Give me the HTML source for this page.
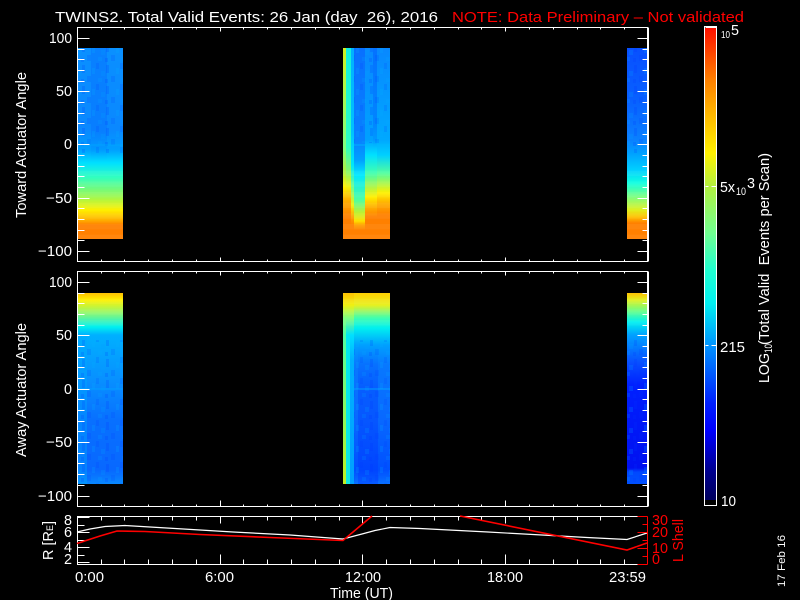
<!DOCTYPE html>
<html><head><meta charset="utf-8"><title>TWINS2</title>
<style>
html,body{margin:0;padding:0;background:#000;width:800px;height:600px;overflow:hidden}
svg{display:block;position:absolute;left:0;top:0}
text{font-family:"Liberation Sans",sans-serif;font-size:14.5px;fill:#fff}
.r{fill:#f00}
.s{font-size:11px}
</style></head><body>
<svg width="800" height="600" viewBox="0 0 800 600" xmlns="http://www.w3.org/2000/svg">
<defs>
<linearGradient id="a1" gradientUnits="userSpaceOnUse" x1="0" y1="0" x2="0" y2="1000">
<stop offset=".048" stop-color="#0a90ff"/><stop offset=".13" stop-color="#0a88ff"/><stop offset=".15" stop-color="#00a0ff"/><stop offset=".163" stop-color="#00e0ff"/><stop offset=".177" stop-color="#30ffc0"/><stop offset=".197" stop-color="#a0f850"/><stop offset=".21" stop-color="#fff000"/><stop offset=".22" stop-color="#ffb000"/><stop offset=".225" stop-color="#ff8000"/><stop offset=".239" stop-color="#ff8000"/>
</linearGradient>
<linearGradient id="m0" gradientUnits="userSpaceOnUse" x1="0" y1="0" x2="0" y2="1000">
<stop offset=".048" stop-color="#d0f020"/><stop offset=".147" stop-color="#80ff80"/><stop offset=".173" stop-color="#b0f040"/><stop offset=".187" stop-color="#fff000"/><stop offset=".2" stop-color="#ffb000"/><stop offset=".217" stop-color="#ff8000"/><stop offset=".239" stop-color="#ff8000"/>
</linearGradient>
<linearGradient id="m1" gradientUnits="userSpaceOnUse" x1="0" y1="0" x2="0" y2="1000">
<stop offset=".048" stop-color="#10f0e0"/><stop offset=".147" stop-color="#30ffc0"/><stop offset=".173" stop-color="#90f860"/><stop offset=".187" stop-color="#f0f010"/><stop offset=".2" stop-color="#ffb000"/><stop offset=".217" stop-color="#ff8000"/><stop offset=".239" stop-color="#ff8000"/>
</linearGradient>
<linearGradient id="m2" gradientUnits="userSpaceOnUse" x1="0" y1="0" x2="0" y2="1000">
<stop offset=".048" stop-color="#00b0ff"/><stop offset=".13" stop-color="#00c0ff"/><stop offset=".165" stop-color="#00e8f8"/><stop offset=".187" stop-color="#70ff90"/><stop offset=".205" stop-color="#f0f010"/><stop offset=".217" stop-color="#ffa000"/><stop offset=".225" stop-color="#ff8000"/><stop offset=".239" stop-color="#ff8000"/>
</linearGradient>
<linearGradient id="m3" gradientUnits="userSpaceOnUse" x1="0" y1="0" x2="0" y2="1000">
<stop offset=".048" stop-color="#0870ff"/><stop offset=".14" stop-color="#0880ff"/><stop offset=".16" stop-color="#00a0ff"/><stop offset=".175" stop-color="#00e8ff"/><stop offset=".2" stop-color="#50ffa0"/><stop offset=".213" stop-color="#c0f030"/><stop offset=".221" stop-color="#ffe000"/><stop offset=".225" stop-color="#ffa000"/><stop offset=".23" stop-color="#ff8000"/><stop offset=".239" stop-color="#ff8000"/>
</linearGradient>
<linearGradient id="m4" gradientUnits="userSpaceOnUse" x1="0" y1="0" x2="0" y2="1000">
<stop offset=".048" stop-color="#0888ff"/><stop offset=".14" stop-color="#00a0ff"/><stop offset=".155" stop-color="#00e0ff"/><stop offset=".173" stop-color="#40ffb0"/><stop offset=".197" stop-color="#fff000"/><stop offset=".207" stop-color="#ffb000"/><stop offset=".217" stop-color="#ff8000"/><stop offset=".239" stop-color="#ff8000"/>
</linearGradient>
<linearGradient id="m5" gradientUnits="userSpaceOnUse" x1="0" y1="0" x2="0" y2="1000">
<stop offset=".048" stop-color="#0888ff"/><stop offset=".14" stop-color="#00a8ff"/><stop offset=".155" stop-color="#00d0ff"/><stop offset=".173" stop-color="#50ffa0"/><stop offset=".193" stop-color="#fff000"/><stop offset=".203" stop-color="#ffb000"/><stop offset=".215" stop-color="#ff8000"/><stop offset=".239" stop-color="#ff8000"/>
</linearGradient>
<linearGradient id="r1" gradientUnits="userSpaceOnUse" x1="0" y1="0" x2="0" y2="1000">
<stop offset=".048" stop-color="#0850ff"/><stop offset=".1" stop-color="#0860ff"/><stop offset=".14" stop-color="#0a80ff"/><stop offset=".153" stop-color="#00a0ff"/><stop offset=".17" stop-color="#00d0ff"/><stop offset=".183" stop-color="#10ffe0"/><stop offset=".197" stop-color="#80ff80"/><stop offset=".21" stop-color="#e0f020"/><stop offset=".217" stop-color="#ffc000"/><stop offset=".223" stop-color="#ff8000"/><stop offset=".239" stop-color="#ff8000"/>
</linearGradient>
<linearGradient id="a2" gradientUnits="userSpaceOnUse" x1="0" y1="0" x2="0" y2="1000">
<stop offset=".293" stop-color="#ffc000"/><stop offset=".3" stop-color="#fff000"/><stop offset=".313" stop-color="#90f870"/><stop offset=".327" stop-color="#00f0f0"/><stop offset=".335" stop-color="#00b0ff"/><stop offset=".38" stop-color="#0890ff"/><stop offset=".42" stop-color="#0870ff"/><stop offset=".47" stop-color="#0868ff"/><stop offset=".484" stop-color="#0888ff"/>
</linearGradient>
<linearGradient id="n0" gradientUnits="userSpaceOnUse" x1="0" y1="0" x2="0" y2="1000">
<stop offset=".293" stop-color="#ffc000"/><stop offset=".305" stop-color="#f0f010"/><stop offset=".318" stop-color="#80ff80"/><stop offset=".335" stop-color="#50ffa0"/><stop offset=".484" stop-color="#c0f020"/>
</linearGradient>
<linearGradient id="n1" gradientUnits="userSpaceOnUse" x1="0" y1="0" x2="0" y2="1000">
<stop offset=".293" stop-color="#ffc000"/><stop offset=".305" stop-color="#f0f010"/><stop offset=".318" stop-color="#80ff80"/><stop offset=".335" stop-color="#00e8f0"/><stop offset=".484" stop-color="#10e8e0"/>
</linearGradient>
<linearGradient id="n2" gradientUnits="userSpaceOnUse" x1="0" y1="0" x2="0" y2="1000">
<stop offset=".293" stop-color="#ffc000"/><stop offset=".305" stop-color="#f0f010"/><stop offset=".318" stop-color="#80ff80"/><stop offset=".335" stop-color="#00e0ff"/><stop offset=".36" stop-color="#00b0ff"/><stop offset=".484" stop-color="#00a0ff"/>
</linearGradient>
<linearGradient id="n3" gradientUnits="userSpaceOnUse" x1="0" y1="0" x2="0" y2="1000">
<stop offset=".293" stop-color="#ffd000"/><stop offset=".305" stop-color="#e8f020"/><stop offset=".318" stop-color="#40ffb0"/><stop offset=".328" stop-color="#00f0f0"/><stop offset=".345" stop-color="#00a0ff"/><stop offset=".365" stop-color="#0878ff"/><stop offset=".42" stop-color="#0868ff"/><stop offset=".47" stop-color="#0050ff"/><stop offset=".484" stop-color="#0870ff"/>
</linearGradient>
<linearGradient id="r2" gradientUnits="userSpaceOnUse" x1="0" y1="0" x2="0" y2="1000">
<stop offset=".293" stop-color="#ffc000"/><stop offset=".3" stop-color="#e0f020"/><stop offset=".312" stop-color="#60ff90"/><stop offset=".322" stop-color="#00f0f0"/><stop offset=".335" stop-color="#00a0ff"/><stop offset=".362" stop-color="#0850ff"/><stop offset=".385" stop-color="#0020ff"/><stop offset=".468" stop-color="#0010f0"/><stop offset=".472" stop-color="#0048ff"/><stop offset=".484" stop-color="#0050ff"/>
</linearGradient>
<linearGradient id="cb" gradientUnits="userSpaceOnUse" x1="0" y1="0" x2="0" y2="1000">
<stop offset=".028" stop-color="#ff1000"/><stop offset=".08" stop-color="#ff8000"/><stop offset=".11" stop-color="#ffb000"/><stop offset=".153" stop-color="#fff000"/><stop offset=".187" stop-color="#b0f040"/><stop offset=".233" stop-color="#70ff90"/><stop offset=".27" stop-color="#20ffd0"/><stop offset=".303" stop-color="#00f0f0"/><stop offset=".347" stop-color="#0090ff"/><stop offset=".403" stop-color="#0020ff"/><stop offset=".43" stop-color="#0000ff"/><stop offset=".47" stop-color="#000090"/><stop offset=".498" stop-color="#000060"/>
</linearGradient>
<linearGradient id="fd" x1="0" y1="0" x2="0" y2="1">
<stop offset="0" stop-color="#0050ff" stop-opacity=".4"/><stop offset=".75" stop-color="#0050ff" stop-opacity=".3"/><stop offset="1" stop-color="#0050ff" stop-opacity="0"/>
</linearGradient>
<linearGradient id="fu" x1="0" y1="0" x2="0" y2="1">
<stop offset="0" stop-color="#0050ff" stop-opacity="0"/><stop offset=".3" stop-color="#0030ff" stop-opacity=".3"/><stop offset="1" stop-color="#0030ff" stop-opacity=".35"/>
</linearGradient>
<pattern id="tx" patternUnits="userSpaceOnUse" width="24" height="21">
<rect x="0" y="0" width="3" height="6" fill="#0030ff" opacity=".14"/>
<rect x="5" y="8" width="4" height="5" fill="#00a0ff" opacity=".2"/>
<rect x="10" y="2" width="3" height="8" fill="#0030ff" opacity=".18"/>
<rect x="15" y="13" width="4" height="6" fill="#0030ff" opacity=".14"/>
<rect x="20" y="5" width="3" height="6" fill="#00b0ff" opacity=".18"/>
<rect x="2" y="15" width="4" height="4" fill="#00b0ff" opacity=".15"/>
<rect x="9" y="16" width="3" height="4" fill="#0030ff" opacity=".18"/>
</pattern>
<pattern id="bd" patternUnits="userSpaceOnUse" width="10" height="10.67">
<rect x="0" y="0" width="10" height="5.3" fill="#fff" opacity=".05"/>
</pattern>
</defs>

<g shape-rendering="crispEdges">
<!-- panel 1 data -->
<rect x="78" y="48" width="45" height="191" fill="url(#a1)"/>
<rect x="91" y="48" width="16" height="112" fill="url(#fd)" opacity=".6"/>
<rect x="343" y="48" width="3" height="191" fill="url(#m0)"/>
<rect x="346" y="48" width="5" height="191" fill="url(#m1)"/>
<rect x="351" y="48" width="3" height="191" fill="url(#m2)"/>
<rect x="354" y="48" width="11" height="191" fill="url(#m3)"/>
<rect x="365" y="48" width="12" height="191" fill="url(#m4)"/>
<rect x="373" y="48" width="4" height="100" fill="url(#fd)"/>
<rect x="377" y="48" width="13" height="191" fill="url(#m5)"/>
<rect x="627" y="48" width="20" height="191" fill="url(#r1)"/>
<rect x="78" y="48" width="45" height="105" fill="url(#tx)"/>
<rect x="354" y="48" width="36" height="95" fill="url(#tx)"/>
<rect x="627" y="48" width="20" height="105" fill="url(#tx)"/>
<rect x="78" y="144" width="45" height="2" fill="#00a8ff" opacity=".35"/>
<rect x="354" y="144" width="36" height="2" fill="#00b8ff" opacity=".4"/>
<rect x="78" y="170" width="45" height="69" fill="url(#bd)"/>
<rect x="343" y="170" width="47" height="69" fill="url(#bd)"/>
<rect x="627" y="170" width="20" height="69" fill="url(#bd)"/>
<!-- panel 2 data -->
<rect x="78" y="293" width="45" height="191" fill="url(#a2)"/>
<rect x="78" y="335" width="9" height="149" fill="#00a8ff" opacity=".4"/>
<rect x="343" y="293" width="3" height="191" fill="url(#n0)"/>
<rect x="346" y="293" width="4" height="191" fill="url(#n1)"/>
<rect x="350" y="293" width="4" height="191" fill="url(#n2)"/>
<rect x="354" y="293" width="36" height="191" fill="url(#n3)"/>
<rect x="358" y="345" width="20" height="139" fill="url(#fu)"/>
<rect x="627" y="293" width="20" height="191" fill="url(#r2)"/>
<rect x="78" y="340" width="45" height="144" fill="url(#tx)"/>
<rect x="354" y="340" width="36" height="144" fill="url(#tx)"/>
<rect x="627" y="340" width="20" height="144" fill="url(#tx)"/>
<rect x="78" y="388" width="45" height="2" fill="#00a8ff" opacity=".35"/>
<rect x="354" y="388" width="36" height="2" fill="#00b8ff" opacity=".35"/>
<rect x="78" y="293" width="45" height="36" fill="url(#bd)"/>
<rect x="343" y="293" width="47" height="36" fill="url(#bd)"/>
<rect x="627" y="293" width="20" height="36" fill="url(#bd)"/>
<!-- colorbar -->
<rect x="705" y="27" width="11" height="478" fill="#000"/>
<rect x="705" y="28" width="11" height="472" fill="url(#cb)"/>
</g>

<g shape-rendering="crispEdges" fill="none" stroke="#fff" stroke-width="1" transform="translate(.5,.5)">
<!-- panel 1 box -->
<path d="M77 27H647V261H77Z"/><path d="M648 27V261"/>
<path d="M101 27v2M124 27v2M148 27v2M172 27v2M196 27v2M243 27v2M267 27v2M291 27v2M315 27v2M339 27v2M386 27v2M410 27v2M434 27v2M458 27v2M481 27v2M529 27v2M553 27v2M577 27v2M600 27v2M624 27v2M220 27v4M362 27v4M505 27v4"/>
<path d="M101 261v-2M124 261v-2M148 261v-2M172 261v-2M196 261v-2M243 261v-2M267 261v-2M291 261v-2M315 261v-2M339 261v-2M386 261v-2M410 261v-2M434 261v-2M458 261v-2M481 261v-2M529 261v-2M553 261v-2M577 261v-2M600 261v-2M624 261v-2M220 261v-4M362 261v-4M505 261v-4"/>
<path d="M77 38H89M77 91H89M77 144H89M77 198H89M77 251H89M77 49H84M77 59H84M77 70H84M77 81H84M77 102H84M77 113H84M77 123H84M77 134H84M77 155H84M77 166H84M77 176H84M77 187H84M77 208H84M77 219H84M77 230H84M77 240H84"/>
<path d="M647 38H637M647 91H637M647 144H637M647 198H637M647 251H637M647 49H642M647 59H642M647 70H642M647 81H642M647 102H642M647 113H642M647 123H642M647 134H642M647 155H642M647 166H642M647 176H642M647 187H642M647 208H642M647 219H642M647 230H642M647 240H642"/>
<!-- panel 2 box -->
<path d="M77 271H647V506H77Z"/><path d="M648 271V506"/>
<path d="M101 271v2M124 271v2M148 271v2M172 271v2M196 271v2M243 271v2M267 271v2M291 271v2M315 271v2M339 271v2M386 271v2M410 271v2M434 271v2M458 271v2M481 271v2M529 271v2M553 271v2M577 271v2M600 271v2M624 271v2M220 271v4M362 271v4M505 271v4"/>
<path d="M101 506v-2M124 506v-2M148 506v-2M172 506v-2M196 506v-2M243 506v-2M267 506v-2M291 506v-2M315 506v-2M339 506v-2M386 506v-2M410 506v-2M434 506v-2M458 506v-2M481 506v-2M529 506v-2M553 506v-2M577 506v-2M600 506v-2M624 506v-2M220 506v-6M362 506v-6M505 506v-6"/>
<path d="M77 282H89M77 335H89M77 389H89M77 442H89M77 496H89M77 293H84M77 303H84M77 314H84M77 325H84M77 346H84M77 357H84M77 367H84M77 378H84M77 399H84M77 410H84M77 421H84M77 431H84M77 453H84M77 463H84M77 474H84M77 485H84"/>
<path d="M647 282H637M647 335H637M647 389H637M647 442H637M647 496H637M647 293H642M647 303H642M647 314H642M647 325H642M647 346H642M647 357H642M647 367H642M647 378H642M647 399H642M647 410H642M647 421H642M647 431H642M647 453H642M647 463H642M647 474H642M647 485H642"/>
<!-- panel 3 box -->
<path d="M647 516H77V564H647"/>
<path d="M101 516v4M124 516v4M148 516v4M172 516v4M196 516v4M243 516v4M267 516v4M291 516v4M315 516v4M339 516v4M386 516v4M410 516v4M434 516v4M458 516v4M481 516v4M529 516v4M553 516v4M577 516v4M600 516v4M624 516v4M220 516v7M362 516v7M505 516v7"/>
<path d="M101 564v-5M124 564v-5M148 564v-5M172 564v-5M196 564v-5M243 564v-5M267 564v-5M291 564v-5M315 564v-5M339 564v-5M386 564v-5M410 564v-5M434 564v-5M458 564v-5M481 564v-5M529 564v-5M553 564v-5M577 564v-5M600 564v-5M624 564v-5M220 564v-10M362 564v-10M505 564v-10"/>
<path d="M77 517H89M77 532H89M77 547H89M77 562H89M77 525H84M77 540H84M77 555H84"/>
<!-- colorbar frame -->
<path d="M704 26H716V505H704Z"/><path d="M705 26H716M705 27H716" />
<path d="M705 186H708M711 186H716M705 345H708M711 345H716"/>
</g>

<!-- panel 3 curves -->
<polyline fill="none" stroke="#fff" stroke-width="1.2" points="77,532 90,529 105,526.5 125,525.5 150,527 200,530 233,532 290,535 343,539 362,534 375,530.5 390,527.5 420,528.5 488,532 587,537.5 627,539.5 647,533"/>
<g shape-rendering="crispEdges" transform="translate(.5,.5)" fill="none" stroke="#f00">
<path d="M647 516V564M637 516H647M637 564H647M637 532H647M637 548H647M642 524H647M642 540H647M642 556H647"/>
</g>
<polyline fill="none" stroke="#f00" stroke-width="1.6" points="77,543.5 100,536 117,531 145,531.5 200,534.5 270,537.5 343,540.5 372,516"/>
<polyline fill="none" stroke="#f00" stroke-width="1.6" points="460,516 627,550 647,543"/>

<!-- title -->
<text x="55" y="22" textLength="383" lengthAdjust="spacingAndGlyphs" xml:space="preserve">TWINS2. Total Valid Events: 26 Jan (day  26), 2016</text>
<text class="r" x="452" y="22" textLength="292" lengthAdjust="spacingAndGlyphs">NOTE: Data Preliminary – Not validated</text>

<!-- y axis labels panel 1 -->
<text x="49" y="43" textLength="23" lengthAdjust="spacingAndGlyphs">100</text>
<text x="56" y="96" textLength="16" lengthAdjust="spacingAndGlyphs">50</text>
<text x="64" y="149" textLength="8" lengthAdjust="spacingAndGlyphs">0</text>
<text x="46" y="203" textLength="26" lengthAdjust="spacingAndGlyphs">−50</text>
<text x="38" y="256" textLength="34" lengthAdjust="spacingAndGlyphs">−100</text>
<!-- y axis labels panel 2 -->
<text x="49" y="287" textLength="23" lengthAdjust="spacingAndGlyphs">100</text>
<text x="56" y="340" textLength="16" lengthAdjust="spacingAndGlyphs">50</text>
<text x="64" y="394" textLength="8" lengthAdjust="spacingAndGlyphs">0</text>
<text x="46" y="447" textLength="26" lengthAdjust="spacingAndGlyphs">−50</text>
<text x="38" y="501" textLength="34" lengthAdjust="spacingAndGlyphs">−100</text>
<!-- y axis labels panel 3 -->
<text x="64" y="525" textLength="8" lengthAdjust="spacingAndGlyphs">8</text>
<text x="64" y="537" textLength="8" lengthAdjust="spacingAndGlyphs">6</text>
<text x="64" y="552" textLength="8" lengthAdjust="spacingAndGlyphs">4</text>
<text x="64" y="564" textLength="8" lengthAdjust="spacingAndGlyphs">2</text>
<!-- right red -->
<text class="r" x="652" y="525" textLength="16" lengthAdjust="spacingAndGlyphs">30</text>
<text class="r" x="652" y="537" textLength="16" lengthAdjust="spacingAndGlyphs">20</text>
<text class="r" x="652" y="553" textLength="16" lengthAdjust="spacingAndGlyphs">10</text>
<text class="r" x="652" y="564" textLength="8" lengthAdjust="spacingAndGlyphs">0</text>
<!-- rotated -->
<text transform="translate(26,218) rotate(-90)" textLength="146" lengthAdjust="spacingAndGlyphs">Toward Actuator Angle</text>
<text transform="translate(26,457) rotate(-90)" textLength="134" lengthAdjust="spacingAndGlyphs">Away Actuator Angle</text>
<text transform="translate(53,560) rotate(-90)" textLength="39" lengthAdjust="spacingAndGlyphs">R [R<tspan font-size="9">E</tspan>]</text>
<text class="r" transform="translate(683,562) rotate(-90)" textLength="43" lengthAdjust="spacingAndGlyphs">L Shell</text>
<text class="s" transform="translate(785,587) rotate(-90)" textLength="52" lengthAdjust="spacingAndGlyphs">17 Feb 16</text>
<!-- time labels -->
<text x="75" y="582" textLength="29" lengthAdjust="spacingAndGlyphs">0:00</text>
<text x="205" y="582" textLength="29" lengthAdjust="spacingAndGlyphs">6:00</text>
<text x="345" y="582" textLength="36" lengthAdjust="spacingAndGlyphs">12:00</text>
<text x="487" y="582" textLength="36" lengthAdjust="spacingAndGlyphs">18:00</text>
<text x="609" y="582" textLength="37" lengthAdjust="spacingAndGlyphs">23:59</text>
<text x="330" y="598" textLength="63" lengthAdjust="spacingAndGlyphs">Time (UT)</text>
<!-- colorbar labels -->
<text x="721" y="38" textLength="9" lengthAdjust="spacingAndGlyphs" style="font-size:10px">10</text>
<text x="731" y="35" textLength="8" lengthAdjust="spacingAndGlyphs">5</text>
<text x="720" y="192" textLength="15" lengthAdjust="spacingAndGlyphs">5x</text>
<text class="s" x="736" y="195" textLength="10" lengthAdjust="spacingAndGlyphs">10</text>
<text x="747" y="188" textLength="8" lengthAdjust="spacingAndGlyphs">3</text>
<text x="720" y="352" textLength="25" lengthAdjust="spacingAndGlyphs">215</text>
<text x="721" y="506" textLength="15" lengthAdjust="spacingAndGlyphs">10</text>
<text transform="translate(769,383) rotate(-90)" textLength="30" lengthAdjust="spacingAndGlyphs">LOG</text>
<text class="s" transform="translate(772,353) rotate(-90)" textLength="9" lengthAdjust="spacingAndGlyphs">10</text>
<text transform="translate(769,345) rotate(-90)" textLength="192" lengthAdjust="spacingAndGlyphs" xml:space="preserve">(Total Valid  Events per Scan)</text>
</svg>
</body></html>
